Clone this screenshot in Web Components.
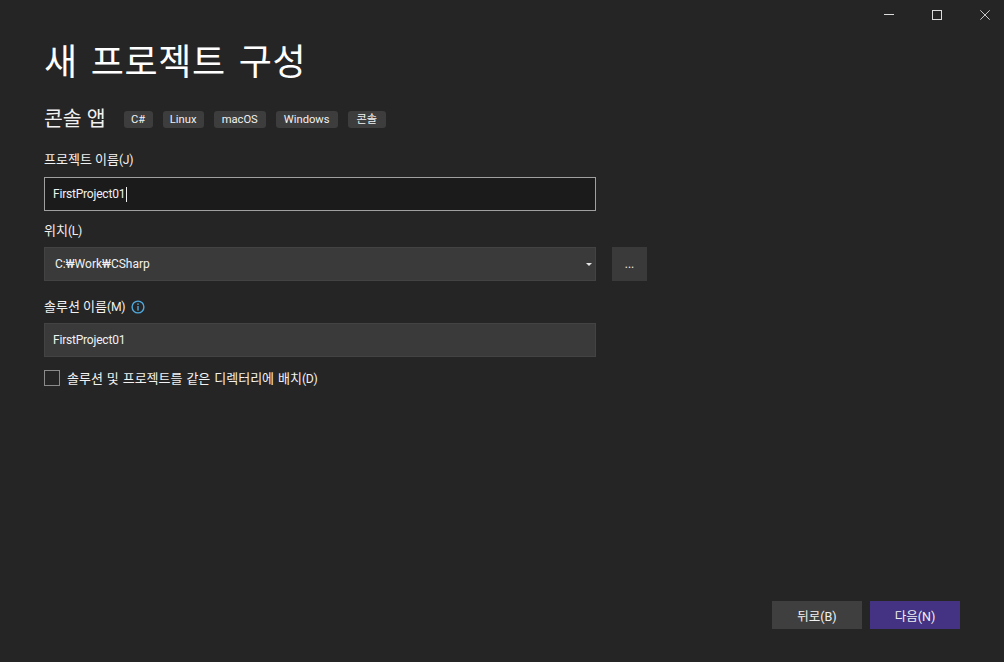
<!DOCTYPE html>
<html lang="ko"><head><meta charset="utf-8"><title>새 프로젝트 구성</title>
<style>
html,body{margin:0;padding:0;height:100%;background:#252526;overflow:hidden}
body{font-family:Roboto,"Noto Sans CJK KR",sans-serif;color:#f1f1f1}
small{font-size:12.2px;letter-spacing:-.3px}
</style></head><body>
<config-page>
  <page-title>새 프로젝트 구성</page-title>
  <tag-row title-text="콘솔 앱">
    <tag-chip style="width:29px">C#</tag-chip><tag-chip style="width:41px">Linux</tag-chip><tag-chip style="width:52px">macOS</tag-chip><tag-chip style="width:62px">Windows</tag-chip><tag-chip style="width:38px">콘솔</tag-chip>
  </tag-row>
  <field-label style="margin-top:17px">프로젝트 이름<small>(J)</small></field-label>
  <text-box focused value="FirstProject01"></text-box>
  <field-label style="margin-top:10px">위치<small>(L)</small></field-label>
  <combo-row value="C:₩Work₩CSharp"></combo-row>
  <field-label style="margin-top:16px" info>솔루션 이름<small>(M)</small></field-label>
  <text-box value="FirstProject01"></text-box>
  <check-box>솔루션 및 프로젝트를 같은 디렉터리에 배치<small>(D)</small></check-box>
  <footer-bar>
    <action-button>뒤로(B)</action-button>
    <action-button primary>다음(N)</action-button>
  </footer-bar>
</config-page>
<script>
function def(name, css, html){
  customElements.define(name, class extends HTMLElement{
    constructor(){super();const r=this.attachShadow({mode:'open'});
      r.innerHTML='<style>'+css+'</style>'+(typeof html==='function'?html(this):html);}
  });
}
def('win-controls',
 ':host{display:flex;justify-content:flex-end;gap:38px;padding-right:14px;height:30px;align-items:center;flex:none}svg{display:block}',
 `<svg width="10" height="10" viewBox="0 0 10 10"><rect x="0" y="4" width="10" height="1" fill="#dcdcdc"/></svg>
  <svg width="10" height="10" viewBox="0 0 10 10"><rect x=".5" y=".5" width="9" height="9" fill="none" stroke="#dcdcdc"/></svg>
  <svg width="10" height="10" viewBox="0 0 10 10"><path d="M.3.3l9.4 9.4M9.7.3L.3 9.7" fill="none" stroke="#c8c8c8" stroke-width="1"/></svg>`);
def('config-page',
 ':host{display:flex;flex-direction:column;height:662px;box-sizing:border-box}main{flex:1;display:flex;flex-direction:column;padding:0 44px}',
 '<win-controls></win-controls><main><slot></slot></main>');
def('page-title',
 ':host{display:block;font-size:36px;line-height:46px;margin-top:10px;color:#fff;font-weight:400;word-spacing:3.5px;letter-spacing:.6px}',
 '<slot></slot>');
def('tag-row',
 ':host{display:flex;align-items:center;height:28px;margin-top:19px;gap:10px}.t{font-size:20.5px;line-height:28px;color:#f1f1f1;margin-right:8px;white-space:nowrap}',
 h=>'<span class="t">'+h.getAttribute('title-text')+'</span><slot></slot>');
def('tag-chip',
 ':host{display:block;box-sizing:border-box;height:17px;line-height:17px;text-align:center;background:#3d3d3d;border-radius:3px;font-size:11.2px;color:#f1f1f1;white-space:nowrap}',
 '<slot></slot>');
def('field-label',
 ':host{display:flex;align-items:center;gap:6px;height:20px;font-size:13px;color:#f1f1f1;line-height:20px;white-space:nowrap}span{display:block}svg{display:block}',
 h=>'<span><slot></slot></span>'+(h.hasAttribute('info')?'<svg width="14" height="14" viewBox="0 0 14 14"><circle cx="7" cy="7" r="5.9" fill="none" stroke="#4fa9dc" stroke-width="1.4"/><rect x="6.3" y="6" width="1.4" height="4.6" fill="#4fa9dc"/><rect x="6.3" y="3.4" width="1.4" height="1.5" fill="#4fa9dc"/></svg>':''));
def('text-box',
 `:host{display:flex;align-items:center;box-sizing:border-box;width:552px;height:34px;margin-top:6px;padding:0 8px;background:#3a3a3a;border:1px solid #434343;font-size:12px;letter-spacing:-.2px;color:#f1f1f1;white-space:nowrap}
  :host([focused]){background:#1b1b1c;border-color:#a0a0a0;margin-top:7px}
  i{display:none;width:1px;height:15px;background:#f1f1f1;margin-left:1px}:host([focused]) i{display:block}`,
 h=>'<span>'+h.getAttribute('value')+'</span><i></i>');
def('combo-row',
 `:host{display:flex;gap:16px;margin-top:6px;height:34px}
  .c{box-sizing:border-box;width:552px;height:34px;display:flex;align-items:center;justify-content:space-between;padding:0 3px 0 10px;background:#3a3a3a;border:1px solid #434343;font-size:12px;color:#f1f1f1}
  .b{width:35px;height:34px;background:#3a3a3a;font-size:12px;color:#f1f1f1;display:flex;align-items:center;justify-content:center;line-height:1}
  svg{display:block}`,
 h=>'<div class="c"><span>'+h.getAttribute('value')+'</span><svg width="6" height="3" viewBox="0 0 6 3"><path d="M0 0h6L3 3z" fill="#e6e6e6"/></svg></div><div class="b">...</div>');
def('check-box',
 `:host{display:flex;align-items:center;gap:7px;margin-top:12px;height:17px;font-size:13px;word-spacing:.7px;color:#f1f1f1;white-space:nowrap}
  b{display:block;box-sizing:border-box;width:16px;height:16px;border:1px solid #8a8a8a}span{display:block}`,
 '<b></b><span><slot></slot></span>');
def('footer-bar',
 ':host{display:flex;justify-content:flex-end;gap:8px;margin-top:auto;margin-bottom:33px}',
 '<slot></slot>');
def('action-button',
 `:host{display:flex;align-items:center;justify-content:center;width:90px;height:28px;background:#3f3f3f;font-size:12.5px;color:#f1f1f1}
  :host([primary]){background:#433382}`,
 '<slot></slot>');
</script>
</body></html>
